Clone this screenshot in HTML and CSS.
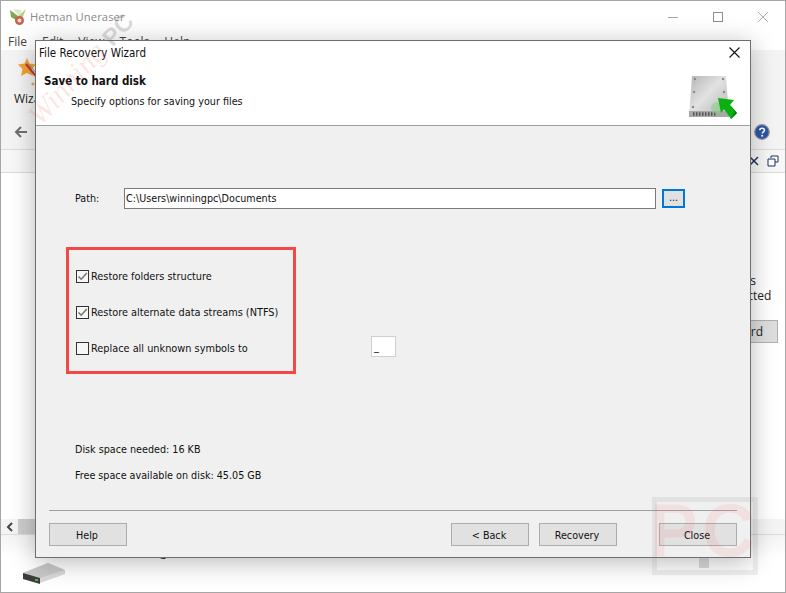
FILE: index.html
```html
<!DOCTYPE html>
<html lang="en">
<head>
<meta charset="utf-8">
<title>Hetman Uneraser</title>
<link rel="stylesheet" href="styles.css">
</head>
<body>
<div class="app">
  <header class="app-title">
    <svg class="app-logo" viewBox="0 0 18 18" width="18" height="18">
      <path d="M1 2 L9 8 L7 12 L2 9 Z" fill="#7fa84e"/><path d="M17 1 L9 8 L13 11 Z" fill="#b5d08a"/>
      <path d="M4 1 L10 8 L13 2 Z" fill="#dfe9c8"/>
      <circle cx="10.5" cy="12.5" r="4.5" fill="#c9604a"/><circle cx="10.5" cy="12.5" r="2" fill="#f3e2d6"/>
    </svg>
    <span class="app-name">Hetman Uneraser</span>
    <div class="win-controls">
      <svg viewBox="0 0 12 12" width="12" height="12"><path d="M1 6.5H11" stroke="#a8a8a8" fill="none"/></svg>
      <svg viewBox="0 0 12 12" width="12" height="12"><rect x="1.5" y="1.5" width="9" height="9" stroke="#8e8e8e" fill="none"/></svg>
      <svg viewBox="0 0 12 12" width="12" height="12"><path d="M1 1L11 11M11 1L1 11" stroke="#a8a8a8" fill="none"/></svg>
    </div>
  </header>
  <nav class="app-menu"><span>File</span><span>Edit</span><span>View</span><span>Tools</span><span>Help</span></nav>
  <section class="app-toolbar">
    <div class="tool">
      <svg class="tool-icon" viewBox="0 0 24 28" width="24" height="28">
        <path d="M9 0 L11.5 5.5 L18 6.5 L13.5 11 L15 18 L9 15 L3 18 L4.5 11 L0 6.5 L6.5 5.5 Z" fill="#f2a437"/>
        <path d="M8 6 L21 22" stroke="#c8372c" stroke-width="2.2"/>
        <path d="M11 6 L22 20" stroke="#8a8a8a" stroke-width="1"/>
        <circle cx="15" cy="26" r="1.6" fill="#f0b04a"/>
      </svg>
      <span>Wizard</span>
    </div>
  </section>
  <section class="app-nav">
    <svg viewBox="0 0 14 14" width="14" height="14"><path d="M13 7H2M7 2L2 7L7 12" stroke="#6f6f6f" stroke-width="2" fill="none"/></svg>
    <svg class="help" viewBox="0 0 16 16" width="16" height="16">
      <circle cx="8" cy="8" r="7.3" fill="#2d55a8" stroke="#9a9a9a" stroke-width="1.2"/>
      <path d="M5.8 6.2C5.8 3.6 10.4 3.6 10.4 6.2C10.4 7.8 8.2 7.8 8.2 9.6" stroke="#fff" stroke-width="1.6" fill="none"/>
      <rect x="7.3" y="10.8" width="1.8" height="1.8" fill="#fff"/>
    </svg>
  </section>
  <section class="app-pane-head">
    <svg viewBox="0 0 10 10" width="10" height="10"><path d="M1 1L9 9M9 1L1 9" stroke="#1d3557" stroke-width="1.5"/></svg>
    <svg viewBox="0 0 12 12" width="12" height="12"><path d="M4 3V1H11V7H8M1 4H8V11H1Z" stroke="#1d3557" fill="#fff"/></svg>
  </section>
  <main class="app-content">
    <div class="app-side">
      <p>items<br>selected</p>
      <div class="app-button">Wizard</div>
    </div>
  </main>
  <div class="app-scroll">
    <span class="scroll-arrow">
      <svg viewBox="0 0 8 10" width="8" height="10"><path d="M6 1L2 5L6 9" stroke="#444" stroke-width="2" fill="none"/></svg>
    </span>
    <span class="scroll-thumb"></span>
  </div>
  <footer class="app-status">
    <svg class="status-disk" viewBox="0 0 44 24" width="44" height="24">
      <path d="M1 12 L26 2 L43 9 L43 13 L18 22 L1 18 Z" fill="#d8d8d8"/>
      <path d="M1 12 L18 17 L43 9 L26 2 Z" fill="#c8c8c8"/>
      <path d="M1 12 L18 17 L18 23 L1 18 Z" fill="#3d3d3d"/>
      <rect x="13" y="18" width="3" height="2" fill="#35c04a"/>
    </svg>
    <span class="status-name">Scanning</span>
  </footer>
</div>

<section class="dialog">
  <div class="dlg-title">
    <span>File Recovery Wizard</span>
    <svg viewBox="0 0 11 11" width="11" height="11"><path d="M.5 .5L10.5 10.5M10.5 .5L.5 10.5" stroke="#111" stroke-width="1.1" fill="none"/></svg>
  </div>
  <div class="dlg-head">
    <div class="dlg-head-text">
      <h1>Save to hard disk</h1>
      <p>Specify options for saving your files</p>
    </div>
    <svg class="dlg-icon" viewBox="0 0 50 46" width="50" height="46">
      <defs>
        <linearGradient id="hdd" x1="0" y1="0" x2="1" y2="1">
          <stop offset="0" stop-color="#b4b4b4"/><stop offset=".45" stop-color="#e2e2e2"/><stop offset="1" stop-color="#b0b0b0"/>
        </linearGradient>
      </defs>
      <path d="M4 1H38L41 42H1Z" fill="url(#hdd)"/>
      <rect x="1" y="36" width="40" height="6" fill="#a8a8a8"/>
      <path d="M5 39H28" stroke="#555" stroke-width="3.4" stroke-dasharray="1.5 1.5"/>
      <g fill="#8a8a8a"><circle cx="7" cy="4" r="1.2"/><circle cx="35" cy="4" r="1.2"/><circle cx="6" cy="17" r="1.2"/><circle cx="36" cy="17" r="1.2"/><circle cx="5" cy="32" r="1.2"/></g>
      <circle cx="29" cy="33" r="6" fill="#7fd07f" opacity=".5"/>
      <path d="M30 23 L46 25 L42 30 L49 38 L43 44 L36 34 L33 38 Z" fill="#09b010"/>
      <path d="M42 30 L49 38 L43 44 L47 37 Z" fill="#067a0a"/>
    </svg>
  </div>
  <div class="dlg-body">
    <div class="path-row">
      <label class="path-label">Path:</label>
      <div class="path-input">C:\Users\winningpc\Documents</div>
      <button class="browse">...</button>
    </div>
    <div class="options">
      <div class="option">
        <span class="check"><svg viewBox="0 0 11 11" width="11" height="11"><path d="M1.5 5.5L4.2 8.2L9.8 2" stroke="#777" stroke-width="1.6" fill="none"/></svg></span>
        <span>Restore folders structure</span>
      </div>
      <div class="option">
        <span class="check"><svg viewBox="0 0 11 11" width="11" height="11"><path d="M1.5 5.5L4.2 8.2L9.8 2" stroke="#777" stroke-width="1.6" fill="none"/></svg></span>
        <span>Restore alternate data streams (NTFS)</span>
      </div>
      <div class="option">
        <span class="check"></span>
        <span>Replace all unknown symbols to</span>
      </div>
      <div class="symbol-input">_</div>
    </div>
    <div class="disk-info">
      <p>Disk space needed: 16 KB</p>
      <p>Free space available on disk: 45.05 GB</p>
    </div>
  </div>
  <div class="dlg-foot">
    <button class="btn">Help</button>
    <div class="foot-right">
      <button class="btn">&lt; Back</button>
      <button class="btn">Recovery</button>
      <button class="btn btn-close">Close</button>
    </div>
  </div>
</section>

<div class="mark-left" aria-hidden="true">Winning <b>PC</b></div>
<div class="mark-box" aria-hidden="true"><span>PC</span><i></i></div>
</body>
</html>
```

FILE: styles.css
```css
* { box-sizing: border-box; }
html, body { margin: 0; height: 100%; }
body {
  width: 786px;
  height: 593px;
  overflow: hidden;
  position: relative;
  background: #fff;
  font-family: "DejaVu Sans Condensed", "DejaVu Sans", sans-serif;
  font-stretch: condensed;
  font-size: 10.7px;
  color: #111;
}
p, h1 { margin: 0; }

.app {
  width: 786px;
  height: 593px;
  border: 1px solid #a6a6a6;
  display: flex;
  flex-direction: column;
  background: #fff;
  color: #222;
  font-family: "Open Sans", sans-serif;
  font-stretch: normal;
}
.app-title {
  height: 31px;
  display: flex;
  align-items: center;
  padding: 0 0 0 8px;
  flex: none;
}
.app-logo { margin-right: 3px; }
.app-name { font-size: 11.2px; letter-spacing: .1px; color: #8a8a8a; }
.win-controls { margin-left: auto; display: flex; gap: 33px; padding-right: 16px; }
.app-menu {
  height: 18px;
  display: flex;
  gap: 15px;
  padding-left: 7px;
  font-size: 12px;
  color: #444;
  flex: none;
  align-items: center;
}
.app-toolbar {
  height: 64px;
  background: #f4f4f4;
  padding: 8px 0 0 13px;
  flex: none;
}
.tool { display: flex; flex-direction: column; gap: 4px; font-size: 12px; }
.tool-icon { margin-left: 4px; }
.app-nav {
  height: 36px;
  background: #f4f4f4;
  border-bottom: 1px solid #dcdcdc;
  display: flex;
  align-items: center;
  justify-content: space-between;
  padding: 0 15px 0 13px;
  flex: none;
}
.app-pane-head {
  height: 23px;
  border-bottom: 1px solid #dcdcdc;
  background: #f7f7f7;
  display: flex;
  align-items: center;
  justify-content: flex-end;
  gap: 8px;
  padding-right: 6px;
  flex: none;
}
.app-content {
  flex: 1;
  display: flex;
  justify-content: flex-end;
  padding: 100px 7px 0 0;
}
.app-side { width: 110px; font-size: 12px; line-height: 15px; }
.app-side p { padding-left: 57px; }
.app-button {
  margin-top: 17px;
  height: 23px;
  background: #dedede;
  border: 1px solid #b0b0b0;
  text-align: right;
  padding: 3px 14px 0 0;
}
.app-scroll {
  height: 16px;
  display: flex;
  flex: none;
  border-bottom: 1px solid #dcdcdc;
  background: #f4f4f4;
}
.scroll-arrow { width: 17px; display: flex; align-items: center; justify-content: center; }
.scroll-thumb { width: 100px; background: #cdcdcd; }
.app-status {
  height: 57px;
  display: flex;
  padding: 0 0 0 21px;
  gap: 50px;
  flex: none;
  background: linear-gradient(#f4f4f4, #fff 40%);
}
.status-disk { margin-top: 26px; }
.status-name { font-size: 12px; margin-top: 8px; }

.dialog {
  position: absolute;
  left: 35px;
  top: 40px;
  width: 716px;
  height: 518px;
  display: flex;
  flex-direction: column;
  background: #f0f0f0;
  border: 1px solid #6e6e6e;
  box-shadow: 0 4px 24px rgba(0, 0, 0, .28);
}
.dlg-title {
  height: 24px;
  background: #fff;
  display: flex;
  align-items: center;
  justify-content: space-between;
  padding: 0 10px 1px 3px;
  font-size: 11.5px;
  flex: none;
}
.dlg-head {
  height: 61px;
  background: #fff;
  border-bottom: 1px solid #a0a0a0;
  display: flex;
  justify-content: space-between;
  padding: 0 12px 0 8px;
  flex: none;
}
.dlg-head-text h1 { font-size: 11.5px; font-weight: 700; line-height: 16px; margin-top: 8px; }
.dlg-head-text p { line-height: 16px; margin: 5px 0 0 27px; }
.dlg-icon { margin-top: 10px; }

.dlg-body { flex: 1; padding: 62px 0 0 39px; position: relative; min-height: 0; }
.path-row { display: flex; align-items: center; height: 21px; }
.path-label { width: 49px; }
.path-input {
  width: 532px;
  height: 21px;
  border: 1px solid #7a7a7a;
  background: #fff;
  padding-left: 1px;
  line-height: 20px;
}
.browse {
  margin-left: 6px;
  width: 23px;
  height: 19px;
  border: 2px solid #0078d7;
  background: #e1e1e1;
  font: inherit;
  color: #111;
  padding: 0 0 2px;
}
.options {
  position: relative;
  width: 230px;
  height: 127px;
  margin: 38px 0 0 -9px;
  border: 3px solid #f44747;
  padding: 19px 0 0 7px;
  display: flex;
  flex-direction: column;
  gap: 21px;
  font-size: 10.85px;
}
.option { display: flex; align-items: center; height: 15px; gap: 2px; }
.check {
  width: 13px;
  height: 13px;
  border: 1px solid #333;
  background: #f6f6f6;
  display: flex;
  align-items: center;
  justify-content: center;
}
.symbol-input {
  position: absolute;
  left: 302px;
  top: 86px;
  width: 25px;
  height: 21px;
  background: #fff;
  border: 1px solid #cfcfcf;
  padding-left: 2px;
  line-height: 19px;
}
.disk-info { margin-top: 68px; display: flex; flex-direction: column; gap: 11px; line-height: 15px; }

.dlg-foot {
  height: 47px;
  margin: 0 13px;
  border-top: 1px solid #a0a0a0;
  display: flex;
  justify-content: space-between;
  padding: 12px 0 0 0;
  flex: none;
}
.foot-right { display: flex; gap: 10px; }
.btn {
  width: 78px;
  height: 23px;
  background: #e1e1e1;
  border: 1px solid #adadad;
  font: inherit;
  color: #111;
  padding: 2px 2px 0 0;
}
.btn-close { margin-left: 32px; }

.mark-left {
  position: absolute;
  left: 46px;
  top: 98px;
  font-family: "Liberation Serif", serif;
  font-style: italic;
  font-size: 30px;
  color: rgba(240, 90, 90, .16);
  transform: rotate(-48deg);
  transform-origin: 0 100%;
  white-space: nowrap;
  pointer-events: none;
}
.mark-left b { color: rgba(90, 90, 90, .22); font-style: normal; font-family: "Liberation Sans", sans-serif; font-size: 24px; }
.mark-box {
  position: absolute;
  left: 652px;
  top: 497px;
  width: 106px;
  height: 78px;
  border: 5px solid rgba(120, 120, 120, .12);
  pointer-events: none;
  display: flex;
  justify-content: center;
}
.mark-box span {
  font-family: "Liberation Sans", sans-serif;
  font-size: 70px;
  line-height: 58px;
  letter-spacing: 6px;
  color: #f05a5a;
  -webkit-text-stroke: 3px #f05a5a;
  opacity: .1;
}
.mark-box i {
  position: absolute;
  left: 42px;
  top: 56px;
  width: 10px;
  height: 10px;
  background: rgba(120, 120, 120, .3);
}
```
